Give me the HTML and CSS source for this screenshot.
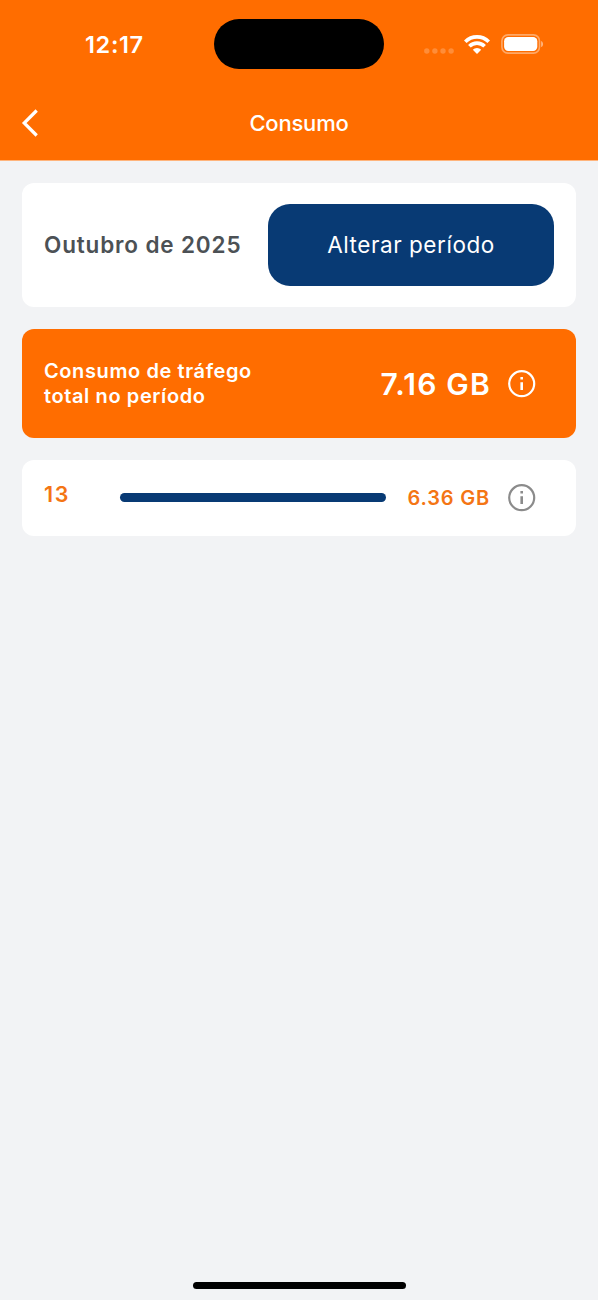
FILE: index.html
```html
<!DOCTYPE html>
<html lang="pt">
<head>
<meta charset="utf-8">
<title>Consumo</title>
<link rel="stylesheet" href="styles.css">
</head>
<body>
<div class="screen">
  <header class="header">
    <div class="status-bar">
      <span class="clock">12:17</span>
      <div class="island"></div>
      <div class="indicators">
        <svg class="signal" width="30" height="6" viewBox="0 0 30 6" fill="#ff8d38"><circle cx="2.8" cy="3" r="2.7"/><circle cx="10.9" cy="3" r="2.7"/><circle cx="19" cy="3" r="2.7"/><circle cx="27.1" cy="3" r="2.7"/></svg>
        <svg class="wifi" width="26" height="19" viewBox="0 0 26 19" fill="none" stroke="#fff" stroke-width="3.7"><path d="M1.3 6.7a16.600 16.600 0 0 1 23.400 0"/><path d="M5.400 11.200a10.700 10.700 0 0 1 15.200 0"/><path d="M13 19l-4.200-4.300a5.900 5.900 0 0 1 8.400 0z" fill="#fff" stroke="none"/></svg>
        <svg class="battery" width="43" height="20" viewBox="0 0 43 20"><rect x=".9" y=".9" width="37.6" height="18.2" rx="6" fill="none" stroke="#ffa866" stroke-width="1.6"/><rect x="3.1" y="3.1" width="33.2" height="13.8" rx="4.2" fill="#fff"/><path d="M40.1 6.900c2.600 1 2.600 5.200 0 6.200z" fill="#ffb580"/></svg>
      </div>
    </div>
    <div class="nav-bar">
      <svg class="back" width="17" height="28" viewBox="0 0 17 28" fill="none" stroke="#fff" stroke-width="3.200"><path d="M15.700 1.500L3.200 14l12.500 12.500"/></svg>
      <h1 class="title">Consumo</h1>
    </div>
  </header>
  <main class="content">
    <section class="card period">
      <span class="month">Outubro de 2025</span>
      <button class="change"><span>Alterar período</span></button>
    </section>
    <section class="card total">
      <p class="label"><span class="label-top">Consumo de tráfego</span><br>total no período</p>
      <span class="amount">7.16 GB</span>
      <svg class="info" width="28" height="28" viewBox="0 0 28 28"><circle cx="13.700" cy="13.700" r="12.500" fill="none" stroke="currentColor" stroke-width="2.200"/><path d="M12.400 7h2.600v2.600h-2.600zM12.400 12.200h2.600v7.700h-2.600z" fill="currentColor"/></svg>
    </section>
    <section class="card day">
      <span class="number">13</span>
      <div class="track"></div>
      <span class="usage">6.36 GB</span>
      <svg class="info" width="28" height="28" viewBox="0 0 28 28"><circle cx="13.700" cy="13.700" r="12.500" fill="none" stroke="currentColor" stroke-width="2.200"/><path d="M12.400 7h2.600v2.600h-2.600zM12.400 12.200h2.600v7.700h-2.600z" fill="currentColor"/></svg>
    </section>
  </main>
  <div class="home-indicator"></div>
</div>
</body>
</html>
```
FILE: styles.css
```css
* { box-sizing: border-box; }
body { margin: 0; font-family: Inter, "Liberation Sans", sans-serif; }
.screen { display: flex; flex-direction: column; height: 1300px; background: #f2f3f5; }
.header { height: 161px; background: #ff6d00; color: #fff; border-bottom: 1px solid #ffb47c; }
.status-bar { display: grid; grid-template-columns: 214px 170px 214px; align-items: center; height: 88px; }
.clock { padding-left: 85px; font-size: 23.5px; font-weight: 600; letter-spacing: .65px; line-height: 28px; white-space: nowrap; margin-top: 1px; }
.island { height: 50px; border-radius: 25px; background: #000; }
.indicators { display: flex; align-items: center; padding-left: 40px; }
.signal { margin-top: 14px; }
.wifi { margin-left: 10px; }
.battery { margin-left: 10.5px; }
.nav-bar { display: grid; grid-template-columns: 60px 1fr 60px; align-items: center; height: 70px; }
.back { margin-left: 21px; }
.title { margin: 0; text-align: center; font-size: 22px; font-weight: 500; letter-spacing: -.2px; line-height: 28px; }
.content { display: flex; flex-direction: column; gap: 22px; padding: 22px 22px 0; flex: 1; }
.card { display: flex; align-items: center; border-radius: 12px; background: #fff; }
.period { height: 124px; justify-content: space-between; padding: 0 22px; }
.month { margin-bottom: 2px; color: #4c5155; font-size: 22.5px; font-weight: 600; letter-spacing: .85px; white-space: nowrap; }
.change { width: 286px; height: 82px; padding: 0 0 2px; border: 0; border-radius: 22px; background: #083a74; color: #fff; font-family: inherit; font-size: 22.5px; letter-spacing: .55px; }
.total { height: 109px; padding: 0 40px 0 22px; background: #ff6d00; color: #fff; }
.label { flex: 1; margin: 0; font-size: 20px; font-weight: 600; line-height: 24.5px; letter-spacing: .6px; white-space: nowrap; }
.amount { font-size: 30px; font-weight: 600; letter-spacing: 1.2px; }
.info { flex: none; margin-left: 18px; }
.total .info { margin-left: 17px; }
.day { height: 76px; padding: 0 40px 0 22px; color: #f47514; }
.number { width: 76px; margin-bottom: 8px; font-size: 21.5px; font-weight: 600; letter-spacing: 1.6px; }
.track { width: 266px; height: 8.500px; margin-bottom: 1px; border-radius: 5px; background: #083a74; }
.usage { flex: 1; text-align: right; font-size: 20px; font-weight: 600; letter-spacing: .8px; white-space: nowrap; }
.day .info { color: #8b8b8b; }
.home-indicator { width: 213px; height: 7px; margin: 0 auto 11px; border-radius: 4px; background: #000; }
```
